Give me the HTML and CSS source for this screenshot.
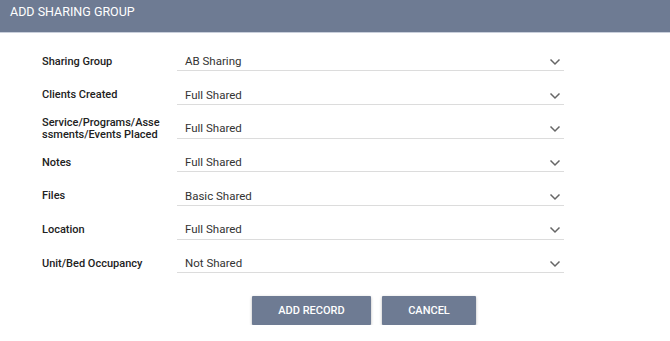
FILE: index.html
```html
<!DOCTYPE html>
<html lang="en">
<head>
    <meta charset="UTF-8">
    <title>Add Sharing Group</title>
    <link rel="stylesheet" href="styles.css">
</head>
<body>
<div class="dialog">
    <div class="dialog-title">ADD SHARING GROUP</div>
    <div class="form">
        <div class="row">
            <label class="label">Sharing Group</label>
            <div class="select"><span>AB Sharing</span><svg class="chev" viewBox="0 0 12 8"><path d="M1.5 1.5 L6 6 L10.5 1.5"/></svg></div>
        </div>
        <div class="row">
            <label class="label">Clients Created</label>
            <div class="select"><span>Full Shared</span><svg class="chev" viewBox="0 0 12 8"><path d="M1.5 1.5 L6 6 L10.5 1.5"/></svg></div>
        </div>
        <div class="row">
            <label class="label">Service/Programs/Asse<br>ssments/Events Placed</label>
            <div class="select"><span>Full Shared</span><svg class="chev" viewBox="0 0 12 8"><path d="M1.5 1.5 L6 6 L10.5 1.5"/></svg></div>
        </div>
        <div class="row">
            <label class="label">Notes</label>
            <div class="select"><span>Full Shared</span><svg class="chev" viewBox="0 0 12 8"><path d="M1.5 1.5 L6 6 L10.5 1.5"/></svg></div>
        </div>
        <div class="row">
            <label class="label">Files</label>
            <div class="select"><span>Basic Shared</span><svg class="chev" viewBox="0 0 12 8"><path d="M1.5 1.5 L6 6 L10.5 1.5"/></svg></div>
        </div>
        <div class="row">
            <label class="label">Location</label>
            <div class="select"><span>Full Shared</span><svg class="chev" viewBox="0 0 12 8"><path d="M1.5 1.5 L6 6 L10.5 1.5"/></svg></div>
        </div>
        <div class="row">
            <label class="label">Unit/Bed Occupancy</label>
            <div class="select"><span>Not Shared</span><svg class="chev" viewBox="0 0 12 8"><path d="M1.5 1.5 L6 6 L10.5 1.5"/></svg></div>
        </div>
    </div>
    <div class="actions">
        <button class="btn btn-add">ADD RECORD</button>
        <button class="btn btn-cancel">CANCEL</button>
    </div>
</div>
</body>
</html>
```
FILE: styles.css
```css
*{
    margin: 0;
    padding: 0;
    box-sizing: border-box;
}
body{
    background: #fff;
    font-family: Roboto, "Liberation Sans", sans-serif;
    color: #222;
}
.dialog-title{
    height: 33px;
    background: #6e7b93;
    border-bottom: 1px solid #c9cfdb;
    color: #fff;
    font-size: 12.5px;
    line-height: 24px;
    padding-left: 10px;
}
.form{
    padding: 4.6px 0 0 42px;
}
.row{
    display: flex;
    height: 33.67px;
}
.label{
    width: 135px;
    font-size: 11px;
    font-weight: 500;
    color: #222;
    line-height: 11.5px;
    display: flex;
    align-items: center;
    padding-top: 14px;
}
.select{
    width: 387px;
    border-bottom: 1px solid #dcdcdc;
    display: flex;
    align-items: center;
    justify-content: space-between;
    padding: 14px 3px 0 8px;
    font-size: 11.5px;
    color: #333;
}
.chev{
    width: 12px;
    height: 8px;
    fill: none;
    stroke: #666;
    stroke-width: 1.5;
    margin-top: 2px;
}
.actions{
    display: flex;
    justify-content: center;
    gap: 11px;
    padding: 22.5px 0 0 0;
    margin-left: 58px;
}
.btn{
    height: 29.5px;
    border: none;
    background: #6e7b93;
    color: #fff;
    font-family: Roboto, "Liberation Sans", sans-serif;
    font-size: 11px;
    font-weight: 500;
    box-shadow: 0 1px 3px rgba(0,0,0,0.3);
    border-radius: 1px;
}
.btn-add{
    width: 119px;
}
.btn-cancel{
    width: 94px;
}
```
